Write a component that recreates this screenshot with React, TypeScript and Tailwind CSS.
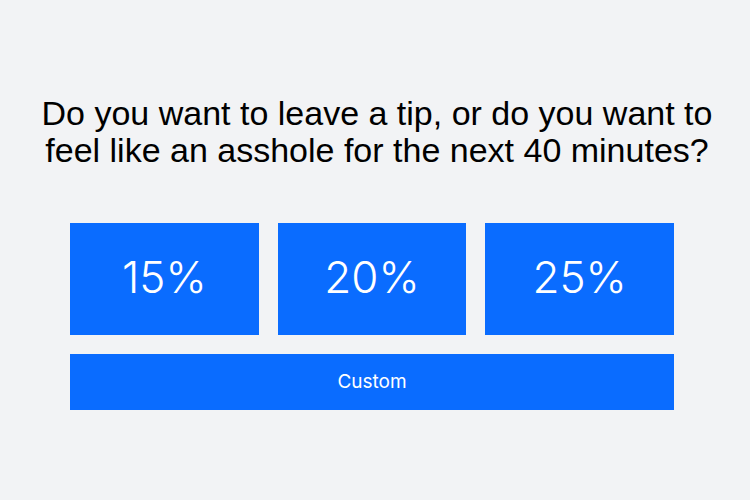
import React from "react";

export default function App() {
  const tips = ["15%", "20%", "25%"];
  return (
    <div className="w-[750px] h-[500px] bg-[#f2f3f5] flex flex-col pt-[95px]">
      <h1 className="pl-[4px] text-center text-black text-[34px] leading-[37px] font-normal font-['Liberation_Sans',Arial,sans-serif]">
        Do you want to leave a tip, or do you want to
        <br />
        feel like an asshole for the next 40 minutes?
      </h1>
      <div className="w-[604px] ml-[70px] mt-[54px] flex flex-col gap-[19px] font-['Inter','Lato',sans-serif]">
        <div className="grid grid-cols-3 gap-[19px]">
          {tips.map((t) => (
            <button
              key={t}
              className="h-[112px] pb-[5px] bg-[#0a6cff] text-white text-[44px] font-light flex items-center justify-center"
            >
              {t}
            </button>
          ))}
        </div>
        <button className="h-[56px] pt-[1px] bg-[#0a6cff] text-white text-[19px] font-normal flex items-center justify-center">
          Custom
        </button>
      </div>
    </div>
  );
}
